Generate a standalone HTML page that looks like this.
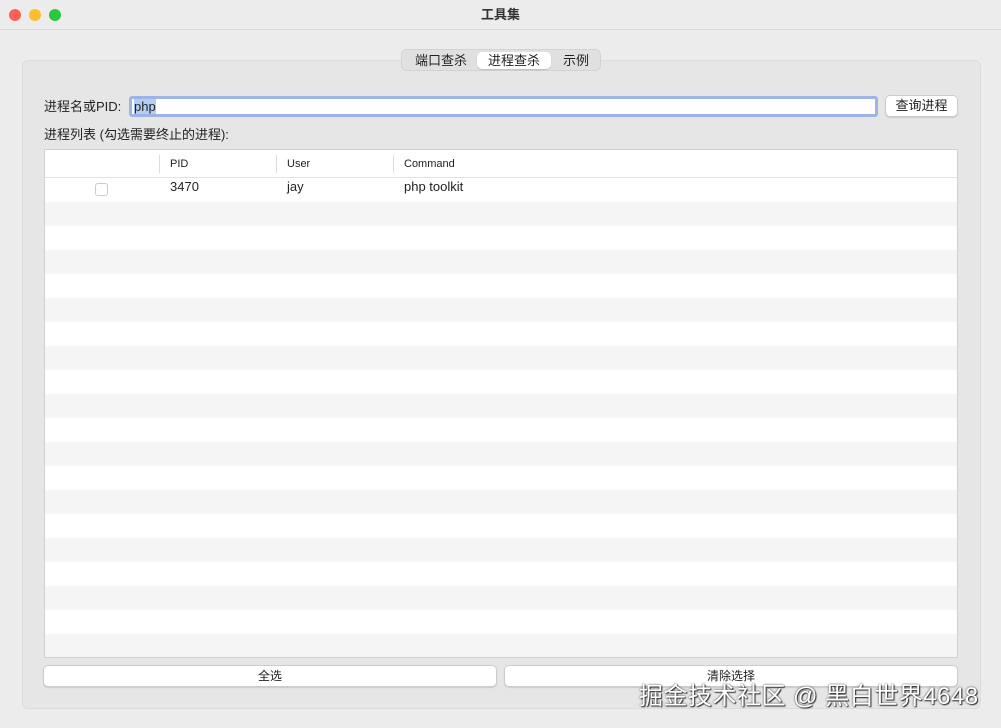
<!DOCTYPE html><html><head><meta charset="utf-8"><style>
*{margin:0;padding:0;box-sizing:border-box}
body{width:1001px;height:728px;background:#ececec;font-family:"Liberation Sans","Noto Sans CJK SC",sans-serif;font-size:12px;color:#222;position:relative;overflow:hidden}
.abs{position:absolute}
.title{left:0;top:0;width:1001px;height:30px;border-bottom:1px solid #d6d6d6;background:#ececec;text-align:center;line-height:30px;font-size:13px;font-weight:bold;color:#333}
.dot{top:9px;width:12px;height:12px;border-radius:50%}
.panel{left:22px;top:60px;width:959px;height:649px;background:#e6e6e6;border:1px solid #dcdcdc;border-radius:6px}
.tabs{left:401px;top:49px;width:200px;height:22px;background:#e0e0e0;border:1px solid #d2d2d2;border-radius:6px}
.tab{position:absolute;top:2px;height:17px;line-height:17px;font-size:13px;text-align:center}
.input{left:129px;top:96px;width:749px;height:21px;background:#fff;border:3px solid #9fb3e6;border-radius:3px;font-size:13px;line-height:15px;padding-left:2px}
.btn{background:#fff;border:1px solid #ccc;border-radius:5px;box-shadow:0 1px 1px rgba(0,0,0,.12);text-align:center;font-size:12px}
.table{left:44px;top:149px;width:914px;height:509px;background:#fff;border:1px solid #d0d0d0;overflow:hidden}
.row{position:absolute;left:0;width:100%;height:24px}
.hd{position:absolute;top:5px;height:18px;border-left:1px solid #ddd;padding-left:10px;line-height:18px;font-size:11px}
</style></head><body>
<div class="abs title">工具集</div>
<div class="abs dot" style="left:9px;background:#fe5f57"></div>
<div class="abs dot" style="left:29px;background:#febc2e"></div>
<div class="abs dot" style="left:49px;background:#28c840"></div>
<div class="abs panel"></div>
<div class="abs tabs">
<div class="tab" style="left:6px;width:66px">端口查杀</div>
<div class="tab" style="left:75px;width:74px;background:#fff;border-radius:5px;box-shadow:0 1px 1px rgba(0,0,0,.15)">进程查杀</div>
<div class="tab" style="left:152px;width:44px">示例</div>
</div>
<div class="abs" style="left:44px;top:96px;font-size:13px">进程名或PID:</div>
<div class="abs input"><span style="background:#b3cdf5">php</span></div>
<div class="abs btn" style="left:885px;top:95px;width:73px;height:22px;line-height:20px;font-size:13px">查询进程</div>
<div class="abs" style="left:44px;top:124px;font-size:13px">进程列表 (勾选需要终止的进程):</div>
<div class="abs table">
<div class="row" style="top:0;height:28px;border-bottom:1px solid #e2e2e2">
<div class="hd" style="left:114px">PID</div><div class="hd" style="left:231px">User</div><div class="hd" style="left:348px">Command</div></div>
<div class="row" style="top:28px;font-size:13px">
<div class="abs" style="left:50px;top:5px;width:13px;height:13px;border:1px solid #ccc;border-radius:3px"></div>
<span class="abs" style="left:125px;top:1px">3470</span><span class="abs" style="left:242px;top:1px">jay</span><span class="abs" style="left:359px;top:1px">php toolkit</span></div>
<div style="position:absolute;left:0;top:52px;width:100%;height:460px;background:repeating-linear-gradient(#f5f5f5 0 24px,#fff 24px 48px)"></div>
</div>
<div class="abs btn" style="left:43px;top:665px;width:454px;height:22px;line-height:20px">全选</div>
<div class="abs btn" style="left:504px;top:665px;width:454px;height:22px;line-height:20px">清除选择</div>
<div class="abs" style="left:639px;top:676px;font-size:24px;letter-spacing:0.5px;color:#fff;text-shadow:0 0 2px #333,1px 1px 1px #333;white-space:nowrap">掘金技术社区 @ 黑白世界4648</div>
</body></html>
